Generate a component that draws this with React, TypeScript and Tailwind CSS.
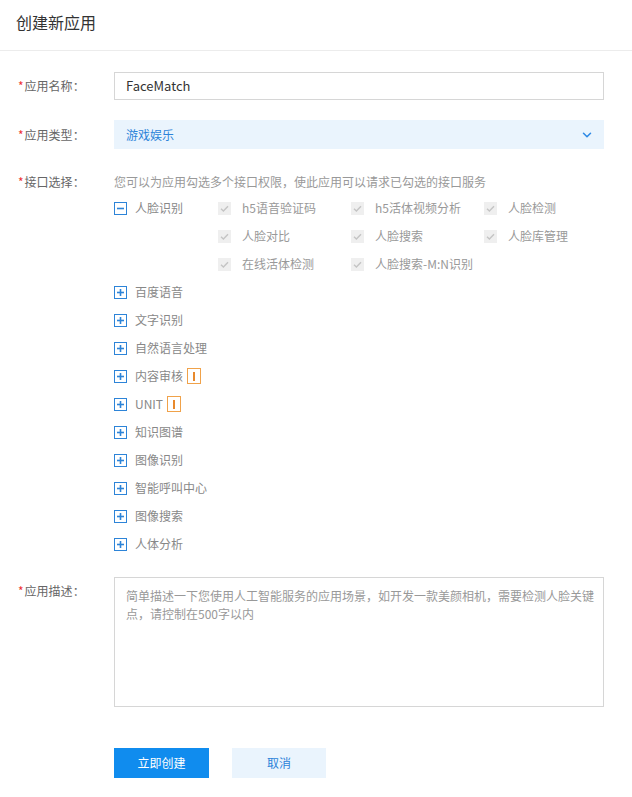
import { ChevronDown } from 'lucide-react'

const FONT = { fontFamily: '"Noto Sans CJK SC", "Noto Sans", sans-serif' }

const FACE_APIS = [
  'h5语音验证码', 'h5活体视频分析', '人脸检测',
  '人脸对比', '人脸搜索', '人脸库管理',
  '在线活体检测', '人脸搜索-M:N识别',
]

const OTHER_APIS = [
  { label: '百度语音' },
  { label: '文字识别' },
  { label: '自然语言处理' },
  { label: '内容审核', badge: true },
  { label: 'UNIT', badge: true },
  { label: '知识图谱' },
  { label: '图像识别' },
  { label: '智能呼叫中心' },
  { label: '图像搜索' },
  { label: '人体分析' },
]

function ToggleBox({ open }: { open?: boolean }) {
  return (
    <svg width="13" height="13" viewBox="0 0 13 13" className="shrink-0">
      <rect x="0.5" y="0.5" width="12" height="12" fill="#fff" stroke="#2d84d8" />
      <line x1="3" y1="6.5" x2="10" y2="6.5" stroke="#2d84d8" strokeWidth="1.6" />
      {!open && <line x1="6.5" y1="3" x2="6.5" y2="10" stroke="#2d84d8" strokeWidth="1.6" />}
    </svg>
  )
}

function DisabledCheck() {
  return (
    <svg width="13" height="13" viewBox="0 0 13 13" className="shrink-0">
      <rect x="0" y="0" width="13" height="13" fill="#efefef" />
      <path d="M3 6.8 L5.4 9 L10 4.2" fill="none" stroke="#c4c4c4" strokeWidth="1.4" />
    </svg>
  )
}

function Badge() {
  return (
    <span className="ml-[4px] inline-flex h-[16px] w-[14px] items-center justify-center border border-[#f0a24a]">
      <span className="h-[9px] w-[1.5px] bg-[#e8892c]" />
    </span>
  )
}

function Label({ text, className = '' }: { text: string; className?: string }) {
  return (
    <div className={`w-[114px] shrink-0 pl-[18px] text-[12px] leading-[16px] text-[#666] ${className}`}>
      <span className="mr-[1px] text-[#e33]">*</span>
      {text}：
    </div>
  )
}

export default function App() {
  return (
    <div className="min-h-[797px] w-[632px] bg-white" style={FONT}>
      <div className="h-[51px] border-b border-[#ececec] pl-[16px] pt-[12px]">
        <h1 className="text-[16px] leading-[20px] text-[#333]">创建新应用</h1>
      </div>

      <div className="mt-[21px] flex items-center">
        <Label text="应用名称" />
        <div className="mr-[28px] flex h-[28px] flex-1 items-center border border-[#d6d6d6] px-[11px] text-[13px] text-[#333]">
          FaceMatch
        </div>
      </div>

      <div className="mt-[20px] flex items-center">
        <Label text="应用类型" />
        <div className="mr-[28px] flex h-[29px] flex-1 items-center justify-between bg-[#eaf4fd] pl-[12px] pr-[10px] text-[12px] text-[#2c83d9]">
          <span>游戏娱乐</span>
          <ChevronDown size={14} strokeWidth={2.6} color="#2e8ae6" />
        </div>
      </div>

      <div className="mt-[25px] flex">
        <Label text="接口选择" />
        <div className="flex-1">
          <p className="text-[12px] leading-[16px] text-[#999]">
            您可以为应用勾选多个接口权限，使此应用可以请求已勾选的接口服务
          </p>
          <div className="mt-[4px] flex">
            <div className="flex h-[28px] w-[104px] shrink-0 items-center gap-[8px] text-[12px] text-[#888]">
              <ToggleBox open />
              <span>人脸识别</span>
            </div>
            <div className="grid grid-cols-[133px_133px_133px]">
              {FACE_APIS.map((name) => (
                <div key={name} className="flex h-[28px] items-center gap-[11px] text-[12px] text-[#999]">
                  <DisabledCheck />
                  <span>{name}</span>
                </div>
              ))}
            </div>
          </div>
          {OTHER_APIS.map(({ label, badge }) => (
            <div key={label} className="flex h-[28px] items-center gap-[8px] text-[12px] text-[#888]">
              <ToggleBox />
              <span className="flex items-center">
                {label}
                {badge && <Badge />}
              </span>
            </div>
          ))}
        </div>
      </div>

      <div className="mt-[19px] flex">
        <Label text="应用描述" className="pt-[6px]" />
        <div className="mr-[28px] h-[130px] flex-1 border border-[#d6d6d6] py-[9px] pl-[11px] pr-[6px] text-[12px] leading-[18px] text-[#999]">
          简单描述一下您使用人工智能服务的应用场景，如开发一款美颜相机，需要检测人脸关键点，请控制在500字以内
        </div>
      </div>

      <div className="mt-[41px] flex gap-[23px] pl-[114px]">
        <button className="h-[30px] w-[95px] bg-[#108cee] text-[12px] text-white">立即创建</button>
        <button className="h-[30px] w-[94px] bg-[#eaf4fd] text-[12px] text-[#2c83d9]">取消</button>
      </div>
    </div>
  )
}
